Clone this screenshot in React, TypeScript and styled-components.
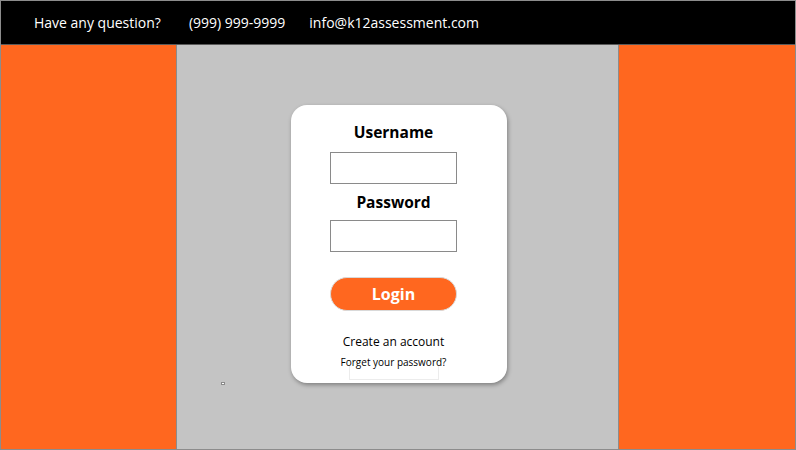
import React from "react";
import styled, { createGlobalStyle } from "styled-components";

const GlobalStyle = createGlobalStyle`
  html, body {
    margin: 0;
    padding: 0;
    background: #ffffff;
  }
  * {
    box-sizing: border-box;
  }
`;

// Frame around the whole page
const Page = styled.div`
  width: 796px;
  height: 450px;
  border: 1px solid #8c8c8c;
  display: flex;
  flex-direction: column;
  font-family: "Open Sans", "Noto Sans", Arial, sans-serif;
  overflow: hidden;
`;

// Top contact bar
const TopBar = styled.header`
  height: 44px;
  background: #000;
  color: #fff;
  display: flex;
  align-items: center;
  padding-left: 33px;
  padding-bottom: 1px;
  gap: 28px;
  font-size: 14px;
  flex-shrink: 0;
  border-bottom: 1px solid #5a5a5a;
`;

const TopItem = styled.span<{ $shift?: number }>`
  white-space: nowrap;
  margin-left: ${(p) => p.$shift ?? 0}px;
`;

const Body = styled.main`
  flex: 1;
  display: grid;
  grid-template-columns: 175px 443px 1fr;
`;

const SidePanel = styled.div`
  background: #ff671f;
`;

const Center = styled.section`
  position: relative;
  background: #c4c4c4;
  border-left: 1px solid #8c8c8c;
  border-right: 1px solid #8c8c8c;
  padding: 60px 0 0 114px;
`;

const Card = styled.form`
  width: 216px;
  height: 278px;
  background: #fff;
  border-radius: 16px;
  box-shadow: 1px 2px 4px rgba(0, 0, 0, 0.35);
  display: flex;
  flex-direction: column;
  align-items: center;
  padding: 16px 11px 0 0;
`;

const Label = styled.label<{ $top?: number }>`
  font-size: 15.5px;
  font-weight: 700;
  color: #000;
  line-height: 22px;
  margin-top: ${(p) => p.$top ?? 0}px;
`;

const Field = styled.input<{ $top?: number }>`
  width: 127px;
  height: 32px;
  margin-top: ${(p) => p.$top ?? 9}px;
  border: 1px solid #8a8a8a;
  background: #fff;
  outline: none;
`;

const LoginButton = styled.button`
  width: 127px;
  height: 34px;
  margin-top: 25px;
  border: 1px solid #d9d9d9;
  border-radius: 17px;
  background: #ff671f;
  color: #fff;
  font-family: inherit;
  font-size: 16px;
  font-weight: 700;
  cursor: pointer;
`;

const LinkText = styled.a<{ $size: number; $top: number }>`
  font-size: ${(p) => p.$size}px;
  color: #000;
  text-decoration: none;
  margin-top: ${(p) => p.$top}px;
  line-height: 16px;
  position: relative;
  z-index: 1;
`;

const Ghost = styled.div`
  width: 90px;
  height: 14px;
  margin-top: -4px;
  border: 1px solid #ececec;
  border-top: none;
`;

const Speck = styled.span`
  position: absolute;
  left: 44px;
  top: 337px;
  width: 4px;
  height: 3px;
  background: #fff;
  border: 1px solid #8a8a8a;
`;

export default function App() {
  return (
    <>
      <GlobalStyle />
      <Page>
        <TopBar>
          <TopItem>Have any question?</TopItem>
          <TopItem>(999) 999-9999</TopItem>
          <TopItem $shift={-4}>info@k12assessment.com</TopItem>
        </TopBar>
        <Body>
          <SidePanel />
          <Center>
            <Card onSubmit={(e) => e.preventDefault()}>
              <Label htmlFor="username">Username</Label>
              <Field id="username" type="text" />
              <Label htmlFor="password" $top={7}>
                Password
              </Label>
              <Field id="password" type="password" $top={7} />
              <LoginButton type="submit">Login</LoginButton>
              <LinkText href="#" $size={12} $top={23}>
                Create an account
              </LinkText>
              <LinkText href="#" $size={10} $top={4}>
                Forget your password?
              </LinkText>
              <Ghost />
            </Card>
            <Speck />
          </Center>
          <SidePanel />
        </Body>
      </Page>
    </>
  );
}
